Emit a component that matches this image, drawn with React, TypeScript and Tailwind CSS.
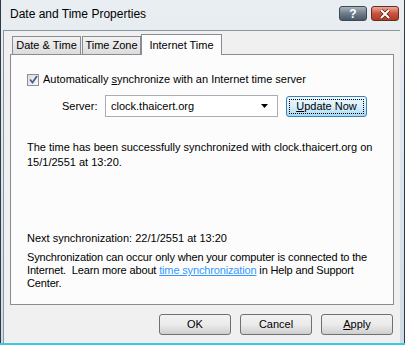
import React from 'react';

const font = { fontFamily: '"Liberation Sans", Arial, sans-serif' };

const Btn = ({ children, className = '' }: { children: React.ReactNode; className?: string }) => (
  <div
    className={`w-[72px] h-[21px] flex items-center justify-center rounded-[3px] border border-[#707070] bg-gradient-to-b from-[#f2f2f2] via-[#ebebeb] to-[#cfcfcf] text-[11px] text-black ${className}`}
  >
    {children}
  </div>
);

export default function App() {
  return (
    <div className="w-[405px] h-[345px] overflow-hidden bg-[#2e3a44]" style={font}>
      <div className="h-[343px] ml-[1px] mr-[1px] flex flex-col bg-gradient-to-b from-[#e9eef2] via-[#dde5eb] to-[#cfdbe4]">
        {/* title bar */}
        <div className="h-[30px] flex items-start pt-[6px] pl-[9px] pr-[5px]">
          <span className="text-[12px] text-black leading-[15px] mt-[1px]">Date and Time Properties</span>
          <div className="ml-auto flex gap-[4px]">
            <div className="w-[28px] h-[15px] rounded-[3px] border border-[#3b4a57] bg-gradient-to-b from-[#a9b4be] via-[#6f7d8a] to-[#4a5866] flex items-center justify-center text-white text-[12px] font-bold leading-none">
              ?
            </div>
            <div className="w-[28px] h-[15px] rounded-[3px] border border-[#6b2a22] bg-gradient-to-b from-[#e9a99b] via-[#c9533d] to-[#b13a22] flex items-center justify-center">
              <svg width="12" height="10" viewBox="0 0 12 10">
                <path d="M2 1 L10 9 M10 1 L2 9" stroke="#5a1a10" strokeWidth="3.4" />
                <path d="M2 1 L10 9 M10 1 L2 9" stroke="#fff" strokeWidth="2" />
              </svg>
            </div>
          </div>
        </div>
        {/* client */}
        <div className="flex-1 ml-[2px] mr-[4px] border-l border-t border-[#8a96a2] bg-[#f0f0f0] flex flex-col px-[6px] pt-[2px]">
          {/* tabs */}
          <div className="flex items-end h-[21px] pl-[2px] relative z-10">
            <div className="h-[18px] w-[69px] flex items-center justify-center border border-b-0 border-[#898c95] bg-gradient-to-b from-[#f2f2f2] to-[#dcdcdc] text-[11px]">
              Date &amp; Time
            </div>
            <div className="h-[18px] w-[59px] ml-[1px] flex items-center justify-center border border-b-0 border-[#898c95] bg-gradient-to-b from-[#f2f2f2] to-[#dcdcdc] text-[11px]">
              Time Zone
            </div>
            <div className="h-[21px] w-[81px] -mb-[1px] flex items-center justify-center border border-b-0 border-[#898c95] bg-[#fcfcfc] text-[11px]">
              Internet Time
            </div>
          </div>
          {/* panel */}
          <div className="h-[251px] border border-[#898c95] bg-[#fcfcfc] pl-[16px] pr-[4px] text-[11px] text-black">
            <div className="flex items-center mt-[18px] h-[13px]">
              <div className="w-[12px] h-[12px] border border-[#8e8f8f] bg-gradient-to-br from-[#dcdcdc] to-[#fbfbfb] flex items-center justify-center">
                <svg width="9" height="9" viewBox="0 0 9 9">
                  <path d="M1 4.5 L3.5 7.5 L8 1" fill="none" stroke="#4a5f97" strokeWidth="1.8" />
                </svg>
              </div>
              <span className="ml-[4px]">
                Automatically <span className="underline">s</span>ynchronize with an Internet time server
              </span>
            </div>
            <div className="flex items-center mt-[9px] h-[22px]">
              <span className="ml-[35px] w-[43px]">Server:</span>
              <div className="w-[173px] h-[22px] border border-[#abadb3] bg-white flex items-center pl-[5px] pr-[9px]">
                <span className="flex-1">clock.thaicert.org</span>
                <svg width="7" height="4" viewBox="0 0 7 4">
                  <path d="M0 0 H7 L3.5 4 Z" fill="#000" />
                </svg>
              </div>
              <div className="ml-[8px] w-[81px] h-[21px] rounded-[3px] border border-[#3c7fb1] bg-gradient-to-b from-[#eaf6fd] via-[#d9f0fc] to-[#a7d9f5] p-[2px]">
                <div className="w-full h-full border border-dotted border-black flex items-center justify-center">
                  <span>
                    <span className="underline">U</span>pdate Now
                  </span>
                </div>
              </div>
            </div>
            <p className="mt-[23px] leading-[15px] pr-[6px]">
              The time has been successfully synchronized with clock.thaicert.org on 15/1/2551 at 13:20.
            </p>
            <p className="mt-[62px] leading-[13px]">Next synchronization: 22/1/2551 at 13:20</p>
            <p className="mt-[6px] leading-[13px] tracking-[-0.15px] whitespace-nowrap">
              Synchronization can occur only when your computer is connected to the
              <br />
              Internet.&nbsp; Learn more about <span className="text-[#3399ff] underline">time synchronization</span> in
              Help and Support
              <br />
              Center.
            </p>
          </div>
          {/* buttons */}
          <div className="flex justify-end gap-[9px] mt-[9px] pr-[1px]">
            <Btn>OK</Btn>
            <Btn>Cancel</Btn>
            <Btn>
              <span>
                <span className="underline">A</span>pply
              </span>
            </Btn>
          </div>
        </div>
      </div>
      <div className="h-[2px] bg-[#3cc8e0]" />
    </div>
  );
}
